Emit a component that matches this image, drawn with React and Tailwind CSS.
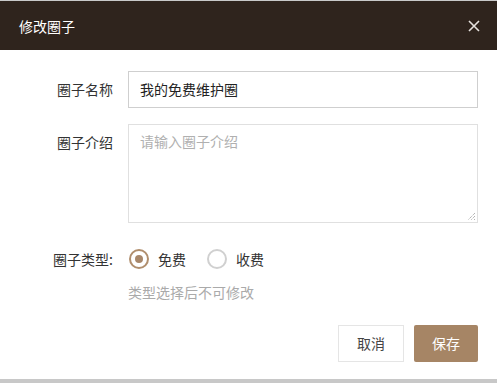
import React from "react";

const font = { fontFamily: '"Noto Sans CJK SC", "Noto Sans", sans-serif' };

export default function App() {
  return (
    <div
      className="w-[497px] h-[383px] flex flex-col bg-white overflow-hidden"
      style={font}
    >
      <div className="h-px bg-[#c9c9c9]" />
      <div className="h-[49px] bg-[#2f241d] flex items-center justify-between pl-[19px] pr-[16px]">
        <span className="text-[14px] text-white leading-none">修改圈子</span>
        <svg width="12" height="12" viewBox="0 0 12 12" className="mr-[1px]">
          <path d="M1 1 L11 11 M11 1 L1 11" stroke="#e6e2de" strokeWidth="1.6" />
        </svg>
      </div>
      <div className="flex-1 flex flex-col pt-[21px]">
        <div className="flex items-center">
          <div className="w-[113px] text-right text-[14px] text-[#333]">圈子名称</div>
          <div className="ml-[15px] w-[350px] h-[37px] border border-[#cfcfcf] flex items-center pl-[11px] text-[14px] text-[#222]">
            我的免费维护圈
          </div>
        </div>
        <div className="flex items-start mt-[16px]">
          <div className="w-[113px] text-right text-[14px] text-[#333] pt-[8px]">圈子介绍</div>
          <div className="relative ml-[15px] w-[350px] h-[99px] border border-[#e0e0e0] pl-[11px] pt-[6px] text-[14px] text-[#b0b0b0]">
            请输入圈子介绍
            <svg width="9" height="9" viewBox="0 0 9 9" className="absolute right-[1px] bottom-[1px]">
              <path d="M8 1 L1 8 M8 4 L4 8 M8 7 L7 8" stroke="#777" strokeWidth="0.8" strokeDasharray="1 1" />
            </svg>
          </div>
        </div>
        <div className="flex items-center mt-[26px] h-[20px]">
          <div className="w-[113px] text-right text-[14px] text-[#333]">圈子类型:</div>
          <div className="ml-[16px] flex items-center">
            <div className="w-[20px] h-[20px] rounded-full border-2 border-[#b08e6d] flex items-center justify-center">
              <div className="w-[8px] h-[8px] rounded-full bg-[#a8876a]" />
            </div>
            <span className="ml-[9px] text-[14px] text-[#333]">免费</span>
            <div className="ml-[21px] w-[20px] h-[20px] rounded-full border-2 border-[#d0d0d0]" />
            <span className="ml-[9px] text-[14px] text-[#333]">收费</span>
          </div>
        </div>
        <div className="ml-[128px] mt-[13px] text-[14px] text-[#aaaaaa] leading-[20px]">
          类型选择后不可修改
        </div>
        <div className="flex justify-end pr-[19px] mt-[23px] gap-[10px]">
          <div className="w-[66px] h-[37px] border border-[#e5e5e5] bg-white flex items-center justify-center text-[14px] text-[#444]">
            取消
          </div>
          <div className="w-[64px] h-[37px] bg-[#a68565] rounded-[2px] flex items-center justify-center text-[14px] text-white">
            保存
          </div>
        </div>
      </div>
      <div className="h-[4px] bg-[#c8c8c8]" />
    </div>
  );
}
